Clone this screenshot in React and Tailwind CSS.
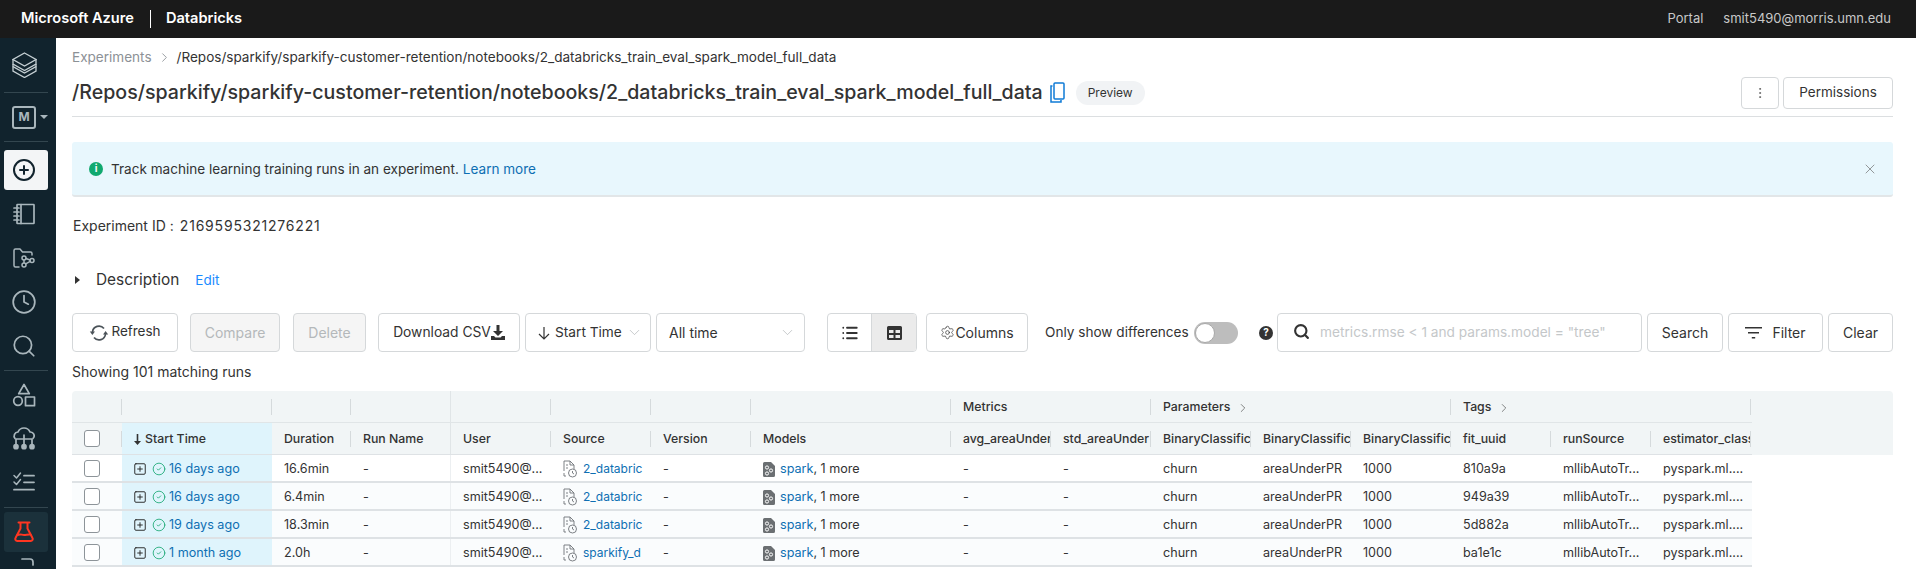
import React from 'react';
import { CirclePlus, Clock, Search, ChevronRight, X, EllipsisVertical, ChevronDown, List, Settings, CircleCheck, SquarePlus } from 'lucide-react';

const GRID = 'grid grid-cols-[50px_150px_79px_100px_100px_100px_100px_200px_100px_100px_100px_100px_100px_100px_100px_100px]';

const HEADERS = ['Duration', 'Run Name', 'User', 'Source', 'Version', 'Models', 'avg_areaUnder', 'std_areaUnder', 'BinaryClassific', 'BinaryClassific', 'BinaryClassific', 'fit_uuid', 'runSource', 'estimator_class'];

const RUNS = [
    { age: '16 days ago', duration: '16.6min', source: '2_databric', uuid: '810a9a', shade: false },
    { age: '16 days ago', duration: '6.4min', source: '2_databric', uuid: '949a39', shade: true },
    { age: '19 days ago', duration: '18.3min', source: '2_databric', uuid: '5d882a', shade: true },
    { age: '1 month ago', duration: '2.0h', source: 'sparkify_d', uuid: 'ba1e1c', shade: true },
];

const Divider = () => <div className="mx-1 h-px w-11 bg-[#33464f]" />;

// sidebar glyphs, all drawn on a 24 box
const Glyph = ({ children, strokeWidth = 1.7 }) => (
    <svg width="24" height="24" viewBox="0 0 24 24" fill="none" stroke="currentColor" strokeWidth={strokeWidth} strokeLinejoin="round" strokeLinecap="round">{children}</svg>
);

const LogoIcon = () => (
    <svg width="25" height="26" viewBox="0 0 25 26" fill="none" stroke="currentColor" strokeWidth="1.300" strokeLinejoin="miter">
        <path d="M12.500 1 24 7.500 12.500 14 1 7.500z" />
        <path d="M1 7.500v4.500l11.500 6.500L24 12V7.500" />
        <path d="M1 12v2.500l11.500 6.500L24 14.500V12" />
        <path d="M1 14.500V19l11.500 6.500L24 19v-4.500" />
    </svg>
);

const NotebookIcon = () => (
    <Glyph>
        <rect x="5" y="2.500" width="17" height="19" rx="0.500" />
        <path d="M9 2.500v19M2 6h5M2 10h5M2 14h5M2 18h5" />
    </Glyph>
);

const RepoIcon = () => (
    <Glyph strokeWidth={1.5}>
        <path d="M7 21H3.500A1.500 1.500 0 0 1 2 19.500V4.500A1.500 1.500 0 0 1 3.500 3H8l2.500 3h8A1.500 1.500 0 0 1 20 7.500V9" />
        <circle cx="12" cy="12" r="2" />
        <circle cx="12" cy="19" r="2" />
        <circle cx="20" cy="14.500" r="2" />
        <path d="M12 14v3M14 12.500l4 1.500M13.700 17.800l4.500-2.500" />
    </Glyph>
);

const ShapesIcon = () => (
    <Glyph>
        <path d="M12 1.500 17.300 10.700H6.700z" />
        <circle cx="6" cy="18" r="4.300" />
        <rect x="13.500" y="14" width="9" height="8.700" />
    </Glyph>
);

const TreeIcon = () => (
    <Glyph>
        <path d="M3 11.500A4 4 0 0 1 6 5a6.500 6.500 0 0 1 12 0 3.800 3.800 0 0 1 3 6.500" />
        <path d="M12 8v10M4 18v-6h16v6" />
        <circle cx="4" cy="19.700" r="2" fill="currentColor" />
        <circle cx="12" cy="19.700" r="2" fill="currentColor" />
        <circle cx="20" cy="19.700" r="2" fill="currentColor" />
    </Glyph>
);

const ChecksIcon = () => (
    <Glyph strokeWidth={1.8}>
        <path d="M12 4.700h10M12 11.300h10M2 18.700h20" />
        <path d="M2 4.500 4.500 7 8.500 2M2 11l2.500 2.500L8.500 8.500" strokeWidth="1.500" />
    </Glyph>
);

const FlaskIcon = () => (
    <Glyph strokeWidth={2}>
        <path d="M6.500 2.500h11M8.500 2.500v6L3.500 18a2 2 0 0 0 1.800 3h13.400a2 2 0 0 0 1.800-3L15.500 8.500v-6" />
        <path d="M5.500 15c3-1.500 4 0 6.500 0s4-1 6.500-.5" />
    </Glyph>
);

const SideIcon = ({ children, className = '' }) => (
    <div className={`mx-1 flex h-11 w-11 items-center justify-center pr-1 text-[#a9b6bc] ${className}`}>{children}</div>
);

const Sidebar = () => (
    <aside className="flex h-full w-14 shrink-0 flex-col overflow-hidden bg-[#11232d] [&>*]:shrink-0">
        <div className="mx-1 flex h-[54px] w-11 items-center justify-center pr-1 text-[#c5cfd3]"><LogoIcon /></div>
        <Divider />
        <div className="flex h-12 items-center pl-3 text-[#a9b6bc]">
            <div className="flex h-[23px] w-6 items-center justify-center rounded-[3px] border-2 border-[#a9b6bc] text-[12px] font-bold">M</div>
            <div className="ml-1 h-0 w-0 border-x-4 border-t-4 border-x-transparent border-t-[#a9b6bc]" />
        </div>
        <Divider />
        <div className="mx-1 mt-2 flex h-10 w-11 items-center justify-center rounded-[3px] bg-[#f3f5f6] pr-1 text-[#11232d]"><CirclePlus size={24} strokeWidth={2} /></div>
        <SideIcon className="mt-[2px]"><NotebookIcon /></SideIcon>
        <SideIcon><RepoIcon /></SideIcon>
        <SideIcon><Clock size={26} strokeWidth={1.6} /></SideIcon>
        <SideIcon><Search size={26} strokeWidth={1.6} /></SideIcon>
        <div className="mt-[2px]"><Divider /></div>
        <SideIcon className="mt-[2px]"><ShapesIcon /></SideIcon>
        <SideIcon><TreeIcon /></SideIcon>
        <SideIcon><ChecksIcon /></SideIcon>
        <div className="mt-[2px]"><Divider /></div>
        <div className="mx-1 mt-1 flex h-10 w-11 items-center justify-center rounded-[3px] bg-[#1b313b] pr-1 text-[#ff3621]"><FlaskIcon /></div>
        <SideIcon className="mt-[4px] !items-start"><Glyph><path d="M10 3h8a3 3 0 0 1 3 3v3" /></Glyph></SideIcon>
    </aside>
);

const Btn = ({ className = '', children }) => (
    <div className={`flex h-[39px] shrink-0 items-center rounded-[4px] border border-[#d5d8da] bg-white text-[14px] text-[#333] ${className}`}>{children}</div>
);

const RefreshIcon = () => (
    <svg width="20" height="20" viewBox="0 0 20 20" fill="none" stroke="#4b5359" strokeWidth="1.700">
        <path d="M3.500 9A6.500 6.500 0 0 1 15 5.500" />
        <path d="M16.500 11A6.500 6.500 0 0 1 5 14.500" />
        <path d="M0.800 8.500h5.200L3.400 12z" fill="#4b5359" stroke="none" />
        <path d="M14 11.500h5.200L16.600 8z" fill="#4b5359" stroke="none" />
    </svg>
);

const DownloadIcon = () => (
    <svg width="14" height="15" viewBox="0 0 14 15" fill="#333">
        <path d="M5.500 0h3v6H12L7 11 2 6h3.500z" />
        <path d="M0 11h3l1.500 1.500h5L11 11h3v4H0z" />
    </svg>
);

const Toolbar = () => (
    <div className="mt-[23px] flex items-center">
        <Btn className="w-[106px] justify-center gap-[2px]"><RefreshIcon /><span className="-mt-[2px] text-[13.500px]">Refresh</span></Btn>
        <Btn className="ml-3 w-[90px] justify-center !bg-[#f5f5f5] !text-[#b4b8ba]">Compare</Btn>
        <Btn className="ml-[13px] w-[73px] justify-center !bg-[#f5f5f5] !text-[#b4b8ba]">Delete</Btn>
        <Btn className="ml-3 w-[142px] justify-center"><span className="text-[13.800px]">Download CSV</span><DownloadIcon /></Btn>
        <Btn className="ml-[5px] w-[126px] pl-3">
            <svg width="12" height="14" viewBox="0 0 12 14" fill="none" stroke="#333" strokeWidth="1.200"><path d="M6 1v12M1 8l5 5 5-5" /></svg>
            <span className="ml-[5px] text-[13.700px]">Start Time</span>
            <ChevronDown size={17} strokeWidth={0.9} className="ml-1 text-[#a8adb0]" />
        </Btn>
        <Btn className="ml-[5px] w-[149px] justify-between pl-3 pr-2"><span>All time</span><ChevronDown size={17} strokeWidth={0.9} className="text-[#a8adb0]" /></Btn>
        <div className="ml-[22px] flex h-[39px] w-[90px] shrink-0 overflow-hidden rounded-[4px] border border-[#d5d8da]">
            <div className="flex w-[44px] items-center justify-center border-r border-[#d5d8da] text-[#333]"><List size={18} strokeWidth={2.4} /></div>
            <div className="flex flex-1 items-center justify-center bg-[#ebebeb] text-[#333]">
                <svg width="15" height="14" viewBox="0 0 15 14" fill="currentColor"><path d="M1.500 0h12A1.500 1.500 0 0 1 15 1.500v11a1.500 1.500 0 0 1-1.500 1.500h-12A1.500 1.500 0 0 1 0 12.500v-11A1.500 1.500 0 0 1 1.500 0zM2 4v3h4.500V4zm6.500 0v3H13V4zM2 9v3h4.500V9zm6.500 0v3H13V9z" fillRule="evenodd" /></svg>
            </div>
        </div>
        <Btn className="ml-[9px] w-[102px] justify-center"><Settings size={15} strokeWidth={1.1} /><span>Columns</span></Btn>
        <span className="ml-[17px] w-[143px] shrink-0 whitespace-nowrap text-[13.600px] text-[#333]">Only show differences</span>
        <div className="ml-[6px] flex h-[22px] w-11 shrink-0 items-center rounded-full bg-[#bdbdbd] pl-[1px]">
            <div className="h-5 w-5 rounded-full border border-[#a8a8a8] bg-white" />
        </div>
        <div className="ml-[21px] flex h-[14px] w-[14px] shrink-0 items-center justify-center rounded-full bg-[#333] text-[10px] font-bold text-white">?</div>
        <div className="ml-[4px] flex h-[39px] w-[365px] shrink-0 items-center rounded-[4px] border border-[#d5d8da] pl-[15px]">
            <Search size={17} strokeWidth={3} className="-mt-[2px] text-[#333]" />
            <span className="ml-[10px] whitespace-nowrap text-[13.700px] text-[#c4c7c9]">metrics.rmse &lt; 1 and params.model = "tree"</span>
        </div>
        <Btn className="ml-[5px] w-[76px] justify-center">Search</Btn>
        <Btn className="ml-[5px] w-[95px] justify-center gap-[10px]">
            <svg width="17" height="14" viewBox="0 0 17 14" fill="#333"><path d="M0 1h17v1.500H0zM3 6h11v1.500H3zM6.800 11h3.400v1.500H6.800z" /></svg>
            <span>Filter</span>
        </Btn>
        <Btn className="ml-[5px] w-[65px] justify-center">Clear</Btn>
    </div>
);

const HeadCell = ({ children, strong, sep = true, wideSep }) => (
    <div className={`relative flex items-center overflow-hidden whitespace-nowrap pl-3 pt-[2px] text-[12.300px] font-medium text-[#333] ${strong ? 'bg-[#dff4fc]' : ''} ${wideSep ? 'border-r border-[#e0e5e7]' : ''}`}>
        {children}
        {sep && <span className="absolute right-0 top-[8px] h-4 w-px bg-[#d5dadc]" />}
    </div>
);

const HeadFill = ({ className = '', children }) => (
    <div className={`relative flex items-center pl-3 pt-[2px] text-[12.300px] font-medium text-[#333] ${className}`}>
        {children}
        <span className="absolute right-0 top-[8px] h-4 w-px bg-[#d5dadc]" />
    </div>
);

const ModelIcon = () => (
    <svg width="12" height="15" viewBox="0 0 12 15" className="shrink-0">
        <path d="M1.500 0H8l4 4v9.500a1.500 1.500 0 0 1-1.500 1.500h-9A1.500 1.500 0 0 1 0 13.500v-12A1.500 1.500 0 0 1 1.500 0z" fill="#6b6f72" />
        <circle cx="4" cy="5.500" r="1.600" fill="none" stroke="#fff" />
        <circle cx="8" cy="8.500" r="1.600" fill="none" stroke="#fff" />
        <circle cx="4" cy="11.500" r="1.600" fill="none" stroke="#fff" />
    </svg>
);

const SourceIcon = () => (
    <svg width="14" height="18" viewBox="0 0 14 18" fill="none" stroke="#6f7478" strokeWidth="0.900" className="shrink-0">
        <path d="M1 11V1h6l4 4v4M7 1v4h4M1 13v3h2" />
        <path d="M3 8h2M3 5h2" />
        <circle cx="9.500" cy="13" r="4" />
        <path d="M9.500 11v2l1.500 1" />
    </svg>
);

const Cell = ({ children, className = '' }) => (
    <div className={`flex items-center overflow-hidden whitespace-nowrap pl-3 pt-[2px] text-[12.600px] text-[#333] ${className}`}>{children}</div>
);

const RunRow = ({ run }) => (
    <div className={`${GRID} h-7 w-[1680px] border-b-2 border-[#dee2e5] ${run.shade ? 'bg-[#fafcfd]' : 'bg-white'}`}>
        <div className="flex items-center pl-3"><div className="h-[17px] w-4 rounded-[3px] border border-[#8d9499] bg-white" /></div>
        <Cell className="bg-[#dff4fc]">
            <SquarePlus size={14} strokeWidth={1.6} className="-ml-[1px] shrink-0 text-[#222]" />
            <CircleCheck size={14} strokeWidth={1.4} className="ml-[5px] shrink-0 text-[#14a66f]" />
            <span className="ml-[3px] text-[#0e6fb3]">{run.age}</span>
        </Cell>
        <Cell>{run.duration}</Cell>
        <Cell className="border-r border-[#eceff1]">-</Cell>
        <Cell>smit5490@...</Cell>
        <Cell><SourceIcon /><span className="ml-[6px] text-[12px] text-[#0e6fb3]">{run.source}</span></Cell>
        <Cell>-</Cell>
        <Cell><ModelIcon /><span className="ml-[5px] text-[#0e6fb3]">spark</span><span>, 1 more</span></Cell>
        <Cell>-</Cell>
        <Cell>-</Cell>
        <Cell>churn</Cell>
        <Cell>areaUnderPR</Cell>
        <Cell>1000</Cell>
        <Cell>{run.uuid}</Cell>
        <Cell>mllibAutoTr...</Cell>
        <Cell>pyspark.ml....</Cell>
    </div>
);

const RunsTable = () => (
    <div className="mt-[10px] overflow-hidden">
        <div className="rounded-t-[4px] bg-[#f1f5f6]">
            <div className={`${GRID} h-8 w-[1680px] border-b border-[#e0e5e7]`}>
                <HeadCell />
                <HeadCell />
                <HeadCell />
                <HeadCell wideSep sep={false} />
                <HeadCell />
                <HeadCell />
                <HeadCell />
                <HeadCell />
                <HeadFill className="col-span-2">Metrics</HeadFill>
                <HeadFill className="col-span-3">Parameters<ChevronRight size={14} strokeWidth={1} className="ml-[6px]" /></HeadFill>
                <HeadFill className="col-span-3">Tags<ChevronRight size={14} strokeWidth={1} className="ml-[6px]" /></HeadFill>
            </div>
            <div className={`${GRID} h-8 w-[1680px] border-b border-[#dee2e5]`}>
                <div className="relative flex items-center pl-3">
                    <div className="h-[17px] w-4 rounded-[3px] border border-[#8d9499] bg-white" />
                    <span className="absolute right-0 top-[8px] h-4 w-px bg-[#d5dadc]" />
                </div>
                <HeadCell strong sep={false}>
                    <svg width="7" height="11" viewBox="0 0 7 11" className="shrink-0" fill="#333"><path d="M2.700 0h1.600v7H7L3.500 11 0 7h2.700z" /></svg>
                    <span className="ml-1">Start Time</span>
                </HeadCell>
                {HEADERS.map((h, i) => (
                    <HeadCell key={i} wideSep={i === 1} sep={i !== 1}>{h}</HeadCell>
                ))}
            </div>
        </div>
        {RUNS.map((run, i) => <RunRow key={i} run={run} />)}
    </div>
);

export default function App() {
    const path = '/Repos/sparkify/sparkify-customer-retention/notebooks/2_databricks_train_eval_spark_model_full_data';
    return (
        <div className="flex h-[569px] flex-col overflow-hidden bg-white font-['Inter',sans-serif]">
            <header className="flex h-[38px] shrink-0 items-center bg-[#1a1a1a] pl-[21px] pr-[25px]">
                <span className="text-[14.600px] font-semibold text-white">Microsoft Azure</span>
                <span className="ml-4 h-[18px] w-px bg-white" />
                <span className="ml-[15px] text-[14.600px] font-semibold text-white">Databricks</span>
                <span className="ml-auto text-[13px] text-[#c8c8c8]">Portal</span>
                <span className="ml-5 text-[13px] text-[#c8c8c8]">smit5490@morris.umn.edu</span>
            </header>
            <div className="flex min-h-0 flex-1">
                <Sidebar />
                <main className="min-w-0 flex-1 overflow-hidden pl-4 pr-[23px]">
                    <div className="mt-[10px] flex h-[18px] items-center whitespace-nowrap text-[13.550px]">
                        <span className="text-[#8c9196]">Experiments</span>
                        <ChevronRight size={15} strokeWidth={1.4} className="ml-[5px] text-[#8c9196]" />
                        <span className="ml-[5px] text-[#333]">{path}</span>
                    </div>
                    <div className="mt-2 flex h-[37px] items-center whitespace-nowrap">
                        <h1 className="text-[19.600px] font-medium text-[#333]">{path}</h1>
                        <svg width="15" height="21" viewBox="0 0 15 21" fill="none" stroke="#0f7bd6" strokeWidth="1.500" className="ml-[7px]"><rect x="4" y="1" width="10" height="16" rx="1" /><path d="M2.500 4H1v16h10v-2" /></svg>
                        <span className="ml-[11px] flex h-6 items-center rounded-full bg-[#f1f3f5] px-3 text-[12px] text-[#333]">Preview</span>
                        <Btn className="ml-auto !h-[32px] w-[38px] justify-center text-[#555]"><EllipsisVertical size={14} strokeWidth={1.3} /></Btn>
                        <Btn className="ml-1 !h-[32px] w-[110px] justify-center !text-[13.500px]">Permissions</Btn>
                    </div>
                    <div className="mt-[5px] h-px bg-[#dcdfe1]" />
                    <div className="mt-[25px] flex h-[55px] items-center rounded-[3px] border-b-2 border-[#e2e6e8] bg-[#e8f7fd] pl-[17px] pr-[15px] text-[13.550px] text-[#333]">
                        <div className="flex h-[14px] w-[14px] items-center justify-center rounded-full bg-[#10a96f] text-[10px] font-bold text-white">i</div>
                        <span className="ml-2 pt-[2px]">Track machine learning training runs in an experiment.</span>
                        <span className="ml-1 pt-[2px] text-[#0e6fb3]">Learn more</span>
                        <X size={16} strokeWidth={1} className="ml-auto text-[#666]" />
                    </div>
                    <div className="ml-px mt-[19px] flex h-[18px] items-center whitespace-nowrap text-[14px] text-[#333]">
                        <span>Experiment ID</span>
                        <span className="ml-1">:</span>
                        <span className="ml-[6px] tracking-[0.8px]">2169595321276221</span>
                    </div>
                    <div className="mt-[34px] flex h-[22px] items-center pt-[2px]">
                        <div className="ml-[3px] h-0 w-0 border-y-[4px] border-l-[5px] border-y-transparent border-l-[#333]" />
                        <span className="ml-[16px] text-[15.400px] text-[#333]">Description</span>
                        <span className="ml-[16px] text-[13.500px] text-[#1a8cff]">Edit</span>
                    </div>
                    <Toolbar />
                    <div className="mt-[11px] h-[18px] text-[14px] leading-[18px] text-[#333]">Showing 101 matching runs</div>
                    <RunsTable />
                </main>
            </div>
        </div>
    );
}
